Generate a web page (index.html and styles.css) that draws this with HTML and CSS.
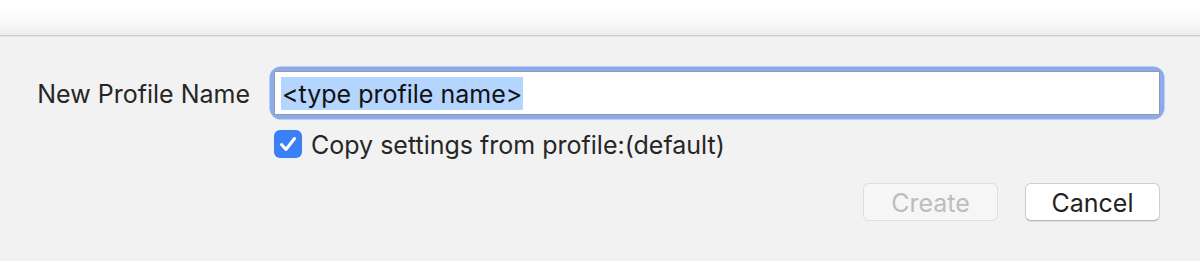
FILE: index.html
```html
<!DOCTYPE html>
<html lang="en">
<head>
<meta charset="utf-8">
<title>New Profile</title>
<link rel="stylesheet" href="styles.css">
</head>
<body>
<div class="toolbar"></div>
<div class="panel">
  <div class="form">
    <label class="label">New Profile Name</label>
    <div class="field-ring">
      <div class="field"><span class="selected">&lt;type profile name&gt;</span></div>
    </div>
    <div class="spacer"></div>
    <div class="check-row">
      <span class="checkbox">
        <svg viewBox="0 0 28 28" width="28" height="28" aria-hidden="true">
          <path d="M7.5 14.5 L12 19.5 L20.5 8.5" fill="none" stroke="#fff" stroke-width="3" stroke-linecap="round" stroke-linejoin="round"/>
        </svg>
      </span>
      <span class="check-text">Copy settings from profile:(default)</span>
    </div>
  </div>
  <div class="buttons">
    <button class="btn btn-disabled" disabled>Create</button>
    <button class="btn">Cancel</button>
  </div>
</div>
</body>
</html>
```
FILE: styles.css
```css
* { box-sizing: border-box; }
html, body {
  margin: 0;
  padding: 0;
  height: 100%;
}
body {
  background: #f2f2f2;
  font-family: Inter, "Liberation Sans", sans-serif;
  color: #262626;
  overflow: hidden;
}
.toolbar {
  height: 36px;
  background: linear-gradient(to bottom, #ffffff 0%, #ffffff 20%, #fafafa 60%, #ececec 100%);
  border-bottom: 1px solid #cdcdcd;
  box-shadow: 0 1px 0 #e4e4e4;
}
.panel {
  padding: 35px 40px 0 38px;
}
.form {
  display: grid;
  grid-template-columns: 212px 1fr;
  column-gap: 24px;
  row-gap: 14px;
  align-items: center;
}
.label {
  font-size: 25px;
  justify-self: end;
  color: #262626;
  white-space: nowrap;
  padding-top: 2px;
}
.field-ring {
  border-radius: 7px;
  box-shadow: 0 0 0 4.5px #8aabef;
}
.field {
  height: 44px;
  background: #fff;
  border: 1px solid #9a9a9a;
  padding: 5px 0 0 6px;
  font-size: 25px;
  color: #111;
}
.selected {
  display: inline-block;
  background: #b4d5fe;
  height: 33px;
  line-height: 35px;
  padding: 0 1px;
}
.check-row {
  display: flex;
  align-items: center;
  gap: 9px;
  height: 30px;
}
.checkbox {
  width: 28px;
  height: 28px;
  border-radius: 6px;
  background: #3b80f6;
  display: flex;
}
.check-text {
  font-size: 25px;
  color: #262626;
  padding-top: 2px;
}
.buttons {
  display: flex;
  justify-content: flex-end;
  gap: 27px;
  margin-top: 24px;
}
.btn {
  width: 135px;
  height: 38px;
  border-radius: 6px;
  font-family: Inter, "Liberation Sans", sans-serif;
  font-size: 25px;
  background: #fff;
  color: #222;
  border: 1px solid #cfcfcf;
  border-bottom-color: #b5b5b5;
  box-shadow: 0 1px 1px rgba(0,0,0,0.08);
  padding: 2px 0 0;
}
.btn-disabled {
  background: #f6f6f6;
  color: #bdbdbd;
  border: 1px solid #dedede;
  box-shadow: none;
}
```
